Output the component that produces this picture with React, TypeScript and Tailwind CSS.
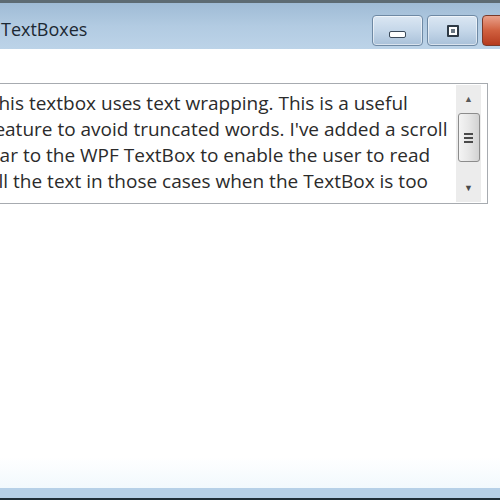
import React from "react";

const lines = [
  "This textbox uses text wrapping. This is a useful",
  "feature to avoid truncated words. I've added a scroll",
  "bar to the WPF TextBox to enable the user to read",
  "all the text in those cases when the TextBox is too",
];

function MinGlyph() {
  return <div className="mt-[8px] h-[7px] w-[17px] rounded-[2px] border border-[#3b4a5a] bg-white" />;
}

function MaxGlyph() {
  return (
    <div className="flex h-[12px] w-[12px] items-center justify-center rounded-[1px] border-2 border-[#2e3a46] bg-white">
      <div className="h-[4px] w-[4px] bg-[#6b7783]" />
    </div>
  );
}

export default function App() {
  return (
    <div
      className="flex h-[500px] w-[500px] flex-col overflow-hidden bg-white"
      style={{ fontFamily: '"Open Sans", "Noto Sans", sans-serif' }}
    >
      {/* outer frame edge */}
      <div className="h-[3px] shrink-0 bg-[#5d6b73]" />
      {/* caption */}
      <div className="flex h-[46px] shrink-0 items-start bg-gradient-to-b from-[#9fbbd5] via-[#b2cbe2] to-[#bcd3e8]">
        <div className="pl-[1px] pt-[15px] text-[18px] leading-[22px] text-[#1c2833]">TextBoxes</div>
        <div className="ml-auto mr-[-28px] mt-[12px] flex gap-[4px]">
          <div className="flex h-[31px] w-[51px] items-center justify-center rounded-[4px] border border-[#6e89a4] bg-gradient-to-b from-[#dbe7f3] via-[#c5d7e9] to-[#a9c1d9] shadow-[inset_0_0_0_1px_rgba(255,255,255,0.55)]">
            <MinGlyph />
          </div>
          <div className="flex h-[31px] w-[51px] items-center justify-center rounded-[4px] border border-[#6e89a4] bg-gradient-to-b from-[#dbe7f3] via-[#c5d7e9] to-[#a9c1d9] shadow-[inset_0_0_0_1px_rgba(255,255,255,0.55)]">
            <MaxGlyph />
          </div>
          <div className="h-[31px] w-[46px] rounded-[4px] border border-[#7a3a2a] bg-gradient-to-b from-[#e8a08a] via-[#d0603f] to-[#b53a1d]" />
        </div>
      </div>

      {/* client area */}
      <div className="flex flex-1 flex-col bg-gradient-to-b from-white from-93% to-[#f2f9fd]">
        <div className="ml-[-30px] mr-[12px] mt-[34px] flex h-[121px] border border-[#a7abb0] bg-white">
          <div className="flex-1 overflow-hidden pl-[17px] pt-[6px] text-[19px] leading-[26px] text-[#2b2b2b]">
            {lines.map((l) => (
              <div key={l} className="whitespace-nowrap">
                {l}
              </div>
            ))}
          </div>
          <div className="my-[1px] mr-[6px] flex w-[25px] flex-col items-center bg-[#ececec]">
            <div className="flex h-[28px] items-center justify-center text-[9px] text-[#5a5a5a]">▲</div>
            <div className="flex h-[49px] w-[22px] flex-col items-center justify-center gap-[2px] rounded-[3px] border border-[#8c8c8c] bg-gradient-to-r from-[#f4f4f4] via-[#e6e6e6] to-[#d2d2d2]">
              <div className="h-[2px] w-[9px] bg-[#4a4a4a]" />
              <div className="h-[2px] w-[9px] bg-[#4a4a4a]" />
              <div className="h-[2px] w-[9px] bg-[#4a4a4a]" />
            </div>
            <div className="flex-1" />
            <div className="flex h-[28px] items-center justify-center text-[9px] text-[#4a4a4a]">▼</div>
          </div>
        </div>
        <div className="flex-1" />
      </div>

      {/* bottom frame */}
      <div className="h-[10px] shrink-0 bg-[#b6d0e7]" />
      <div className="h-[2px] shrink-0 bg-[#1f2e38]" />
    </div>
  );
}
